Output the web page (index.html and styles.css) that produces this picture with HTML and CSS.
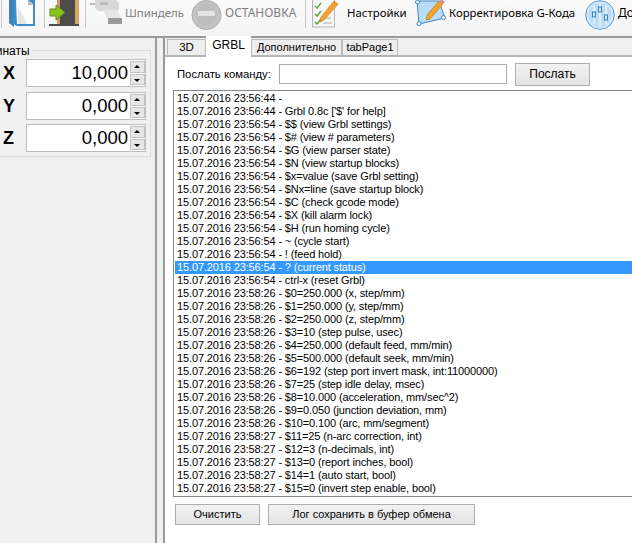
FILE: index.html
```html
<!DOCTYPE html>
<html lang="ru">
<head>
<meta charset="utf-8">
<title>Grbl</title>
<link rel="stylesheet" href="styles.css">
</head>
<body>
<div class="app">
  <header class="toolbar">
    <span class="sep sep-a"></span>
    <svg class="icon book" width="27" height="28" viewBox="0 0 27 28">
      <path d="M0 0H5V27L0 23Z" fill="#3f83bd"/>
      <path d="M4 0H26V26H8L4 24Z" fill="#3d8ccb"/>
      <path d="M7 0H19L24 4V24H8Z" fill="#fff"/>
      <path d="M19 0V5H24Z" fill="#b8b8b8"/>
      <path d="M9 6L18 24H9Z" fill="#e4e4e4"/>
    </svg>
    <span class="sep sep-b"></span>
    <svg class="icon door" width="31" height="27" viewBox="0 0 31 27">
      <rect x="0" y="24" width="30" height="2" fill="#4a4a4a"/>
      <rect x="8" y="0" width="22" height="24" fill="#c08a52"/>
      <rect x="11" y="0" width="15" height="24" fill="#4b4b4b"/>
      <path d="M8 0H11V24H8Z" fill="#d29a60"/>
      <path d="M26 0H30V24H26Z" fill="#dba569"/>
      <rect x="26" y="10" width="2" height="4" fill="#e8a92c"/>
      <path d="M1 9H7V5L16 12.500L7 20V16H1Z" fill="#8cc21e" stroke="#5f8f10"/>
    </svg>
    <span class="sep sep-c"></span>
    <svg class="icon drill" width="33" height="25" viewBox="0 0 33 25">
      <rect x="0" y="3" width="6" height="2" fill="#bbb"/>
      <path d="M5 0H24Q29 0 29 5V8Q29 11 26 11H8L5 8Z" fill="#d8d8d8"/>
      <path d="M13 10H27L31 18H17Z" fill="#e6e6e6"/>
      <rect x="18" y="18" width="14" height="6" fill="#9a9a9a"/>
      <rect x="10" y="2" width="8" height="3" fill="#bdbdbd"/>
    </svg>
    <span class="tool-label muted label-drill">Шпиндель</span>
    <svg class="icon stop" width="31" height="31" viewBox="0 0 31 31">
      <circle cx="15.500" cy="15" r="14.500" fill="#c4c4c4" stroke="#aaa"/>
      <circle cx="15.500" cy="15" r="11" fill="#bdbdbd"/>
      <rect x="7" y="11" width="17" height="5" rx="1" fill="#e4e4e4"/>
    </svg>
    <span class="tool-label muted label-stop">ОСТАНОВКА</span>
    <span class="sep sep-d"></span>
    <svg class="icon check" width="27" height="28" viewBox="0 0 27 28">
      <rect x="0.500" y="-2" width="22" height="29" fill="#f7f7f7" stroke="#b5b5b5"/>
      <path d="M3 6L5 8L9 3M3 14L5 16L9 11M3 22L5 24L9 19" fill="none" stroke="#5da42c" stroke-width="1.300"/>
      <path d="M11 18H19M11 23H20" stroke="#aaa"/>
      <path d="M9 17L22 1L26 4L12 20L8 22Z" fill="#f2a32e" stroke="#c67a17" stroke-width="0.700"/>
    </svg>
    <span class="tool-label label-settings">Настройки</span>
    <svg class="icon correct" width="31" height="27" viewBox="0 0 31 27">
      <path d="M2 1H24L30 18L4 24Z" fill="#b9dcf8" stroke="#3f83bd"/>
      <circle cx="2.500" cy="2" r="2" fill="#fff" stroke="#3f83bd"/>
      <circle cx="28.500" cy="17.500" r="2" fill="#fff" stroke="#3f83bd"/>
      <circle cx="4" cy="23.500" r="2" fill="#fff" stroke="#3f83bd"/>
      <path d="M12 15L24 1L28 4L15 19L11 20Z" fill="#f2a32e" stroke="#c67a17" stroke-width="0.700"/>
      <path d="M24 1L26 -1L30 2L28 4Z" fill="#d58ab0"/>
    </svg>
    <span class="tool-label label-correct">Корректировка G-Кода</span>
    <svg class="icon sliders" width="30" height="30" viewBox="0 0 30 30">
      <circle cx="15" cy="15" r="14.300" fill="#d3e8f8" stroke="#5a9bd0"/>
      <circle cx="15" cy="15" r="11.500" fill="#bcdcf5"/>
      <path d="M9 6V24M15 4V26M21 6V24" stroke="#fff"/>
      <rect x="7.500" y="12" width="3" height="5" fill="#d3e8f8" stroke="#3f7fb5"/>
      <rect x="13.500" y="7" width="3" height="5" fill="#d3e8f8" stroke="#3f7fb5"/>
      <rect x="19.500" y="15" width="3" height="5" fill="#d3e8f8" stroke="#3f7fb5"/>
    </svg>
    <span class="tool-label label-more">Дополнительно</span>
  </header>

  <main class="workspace">
    <aside class="coords">
      <section class="group">
        <span class="group-title">Координаты</span>
        <div class="axis">
          <span class="axis-name">X</span>
          <div class="spin"><span class="spin-value">10,000</span><span class="spin-btns"><span class="spin-up"></span><span class="spin-down"></span></span></div>
        </div>
        <div class="axis">
          <span class="axis-name">Y</span>
          <div class="spin"><span class="spin-value">0,000</span><span class="spin-btns"><span class="spin-up"></span><span class="spin-down"></span></span></div>
        </div>
        <div class="axis axis-last">
          <span class="axis-name">Z</span>
          <div class="spin"><span class="spin-value">0,000</span><span class="spin-btns"><span class="spin-up"></span><span class="spin-down"></span></span></div>
        </div>
      </section>
    </aside>

    <section class="tabs">
      <nav class="tab-strip">
        <span class="tab tab-3d">3D</span>
        <span class="tab tab-active">GRBL</span>
        <span class="tab tab-extra">Дополнительно</span>
        <span class="tab tab-page">tabPage1</span>
      </nav>
      <div class="tab-page-body">
        <div class="send-row">
          <span class="send-label">Послать команду:</span>
          <span class="send-input"></span>
          <span class="btn btn-send">Послать</span>
        </div>
        <div class="log">
          <div class="log-row">15.07.2016 23:56:44 -</div>
          <div class="log-row">15.07.2016 23:56:44 - Grbl 0.8c ['$' for help]</div>
          <div class="log-row">15.07.2016 23:56:54 - $$ (view Grbl settings)</div>
          <div class="log-row">15.07.2016 23:56:54 - $# (view # parameters)</div>
          <div class="log-row">15.07.2016 23:56:54 - $G (view parser state)</div>
          <div class="log-row">15.07.2016 23:56:54 - $N (view startup blocks)</div>
          <div class="log-row">15.07.2016 23:56:54 - $x=value (save Grbl setting)</div>
          <div class="log-row">15.07.2016 23:56:54 - $Nx=line (save startup block)</div>
          <div class="log-row">15.07.2016 23:56:54 - $C (check gcode mode)</div>
          <div class="log-row">15.07.2016 23:56:54 - $X (kill alarm lock)</div>
          <div class="log-row">15.07.2016 23:56:54 - $H (run homing cycle)</div>
          <div class="log-row">15.07.2016 23:56:54 - ~ (cycle start)</div>
          <div class="log-row">15.07.2016 23:56:54 - ! (feed hold)</div>
          <div class="log-row log-selected">15.07.2016 23:56:54 - ? (current status)</div>
          <div class="log-row">15.07.2016 23:56:54 - ctrl-x (reset Grbl)</div>
          <div class="log-row">15.07.2016 23:58:26 - $0=250.000 (x, step/mm)</div>
          <div class="log-row">15.07.2016 23:58:26 - $1=250.000 (y, step/mm)</div>
          <div class="log-row">15.07.2016 23:58:26 - $2=250.000 (z, step/mm)</div>
          <div class="log-row">15.07.2016 23:58:26 - $3=10 (step pulse, usec)</div>
          <div class="log-row">15.07.2016 23:58:26 - $4=250.000 (default feed, mm/min)</div>
          <div class="log-row">15.07.2016 23:58:26 - $5=500.000 (default seek, mm/min)</div>
          <div class="log-row">15.07.2016 23:58:26 - $6=192 (step port invert mask, int:11000000)</div>
          <div class="log-row">15.07.2016 23:58:26 - $7=25 (step idle delay, msec)</div>
          <div class="log-row">15.07.2016 23:58:26 - $8=10.000 (acceleration, mm/sec^2)</div>
          <div class="log-row">15.07.2016 23:58:26 - $9=0.050 (junction deviation, mm)</div>
          <div class="log-row">15.07.2016 23:58:26 - $10=0.100 (arc, mm/segment)</div>
          <div class="log-row">15.07.2016 23:58:27 - $11=25 (n-arc correction, int)</div>
          <div class="log-row">15.07.2016 23:58:27 - $12=3 (n-decimals, int)</div>
          <div class="log-row">15.07.2016 23:58:27 - $13=0 (report inches, bool)</div>
          <div class="log-row">15.07.2016 23:58:27 - $14=1 (auto start, bool)</div>
          <div class="log-row">15.07.2016 23:58:27 - $15=0 (invert step enable, bool)</div>
        </div>
        <div class="actions">
          <span class="btn btn-clear">Очистить</span>
          <span class="btn btn-copy">Лог сохранить в буфер обмена</span>
        </div>
      </div>
    </section>
  </main>
</div>
</body>
</html>
```
FILE: styles.css
```css
* { box-sizing: border-box; }
html, body { margin: 0; padding: 0; height: 100%; overflow: hidden; }
body { background: #f0f0f0; color: #000; font-family: "Liberation Sans", Arial, sans-serif; font-size: 11px; }
.app { width: 632px; height: 543px; display: flex; flex-direction: column; overflow: hidden; }

.toolbar {
  flex: none; height: 38px; display: flex; align-items: flex-start; overflow: hidden; white-space: nowrap;
  background: linear-gradient(#fbfbfb, #f3f3f3); border-bottom: 2px solid #9a9a9a;
  font-family: "Noto Sans", sans-serif; font-size: 11.400px;
}
.sep { flex: none; width: 1px; height: 28px; background: #c8c8c8; }
.sep-a { margin-left: 1px; }
.sep-b { margin-left: 8px; }
.sep-c { margin-left: 5px; }
.sep-d { margin-left: 8px; }
.icon { flex: none; display: block; }
.book { margin-left: 7px; }
.door { margin-left: 4px; }
.drill { margin-left: 4px; }
.stop { margin-left: 8px; }
.check { margin-left: 6px; }
.correct { margin-left: 8px; }
.sliders { margin-left: 9px; }
.tool-label { flex: none; margin-top: 4px; line-height: 18px; }
.muted { color: #808080; }
.label-drill { margin-left: 2px; width: 58px; }
.label-stop { margin-left: 3px; width: 72px; font-size: 12px; }
.label-settings { margin-left: 8px; width: 60px; }
.label-correct { margin-left: 3px; width: 127px; }
.label-more { margin-left: 3px; font-size: 12px; }

.workspace { flex: 1; min-height: 0; display: flex; gap: 6px; }
.coords { flex: none; width: 157px; border-right: 2px solid #9a9a9a; overflow: hidden; padding-top: 12px; }
.group { position: relative; width: 199px; height: 107px; margin-left: -48px; border: 1px solid #dcdcdc; padding: 8px 0 0 48px; display: flex; flex-direction: column; gap: 5px; }
.group-title { position: absolute; left: 6px; top: -7px; padding: 0 3px; background: #f0f0f0; font-size: 12px; line-height: 14px; }
.axis { display: flex; align-items: center; }
.axis-last { margin-top: -1px; }
.axis-name { flex: none; width: 25px; padding-left: 2px; font-size: 18px; font-weight: 700; }
.spin { flex: none; width: 120px; height: 28px; display: flex; border: 1px solid #bdbdbd; background: #fff; }
.spin-value { flex: 1; text-align: right; font-size: 18.500px; line-height: 26px; padding-right: 1px; }
.spin-btns { flex: none; width: 16px; display: flex; flex-direction: column; gap: 1px; background: #fff; padding: 1px 0 1px 1px; }
.spin-up, .spin-down { flex: 1; background: #e6e6e6; border: 1px solid #c4c4c4; position: relative; }
.spin-up::after, .spin-down::after { content: ""; position: absolute; left: 3px; width: 0; height: 0; border-left: 3px solid transparent; border-right: 3px solid transparent; }
.spin-up::after { top: 3px; border-bottom: 3px solid #000; }
.spin-down::after { top: 4px; border-top: 3px solid #000; }

.tabs { flex: 1; min-width: 0; display: flex; flex-direction: column; border-left: 2px solid #9a9a9a; }
.tab-strip { flex: none; height: 19px; display: flex; align-items: flex-end; padding-left: 2px; border-bottom: 2px solid #b4b4b4; }
.tab { height: 18px; margin-bottom: -2px; background: #eeeeee; border: 1px solid #bcbcbc; border-bottom: 2px solid #b4b4b4; font-size: 11.500px; line-height: 15px; text-align: center; }
.tab-3d { width: 39px; }
.tab-active { width: 45px; height: 21px; background: #fff; border: 0; line-height: 18px; font-size: 12px; }
.tab-extra { width: 91px; }
.tab-page { width: 56px; }
.tab-extra, .tab-page { font-size: 11px; }
.tab-page-body { flex: 1; min-height: 0; background: #fff; padding: 5px 0 0 8px; display: flex; flex-direction: column; }

.send-row { flex: none; height: 24px; display: flex; align-items: center; }
.send-label { flex: none; width: 106px; padding-left: 4px; font-size: 11.300px; }
.send-input { flex: none; width: 228px; height: 20px; border: 1px solid #ababab; background: #fff; }
.btn { flex: none; display: block; background: linear-gradient(#f2f2f2, #e4e4e4); border: 1px solid #adadad; text-align: center; }
.btn-send { width: 75px; height: 23px; margin-left: 8px; line-height: 21px; font-size: 12px; }

.log { flex: none; height: 407px; margin-top: 4px; width: 470px; padding: 1px 0 0 1px; border: 1px solid #828790; border-right: 0; background: #fff; overflow: hidden; }
.log-row { height: 13px; line-height: 13px; padding-left: 2px; white-space: nowrap; font-size: 11px; letter-spacing: -0.130px; }
.log-selected { background: #3399ff; color: #fff; }

.actions { flex: none; display: flex; gap: 8px; margin-top: 7px; padding-left: 2px; }
.actions .btn { height: 21px; line-height: 19px; font-size: 11px; }
.btn-clear { width: 85px; }
.btn-copy { width: 207px; }
```
